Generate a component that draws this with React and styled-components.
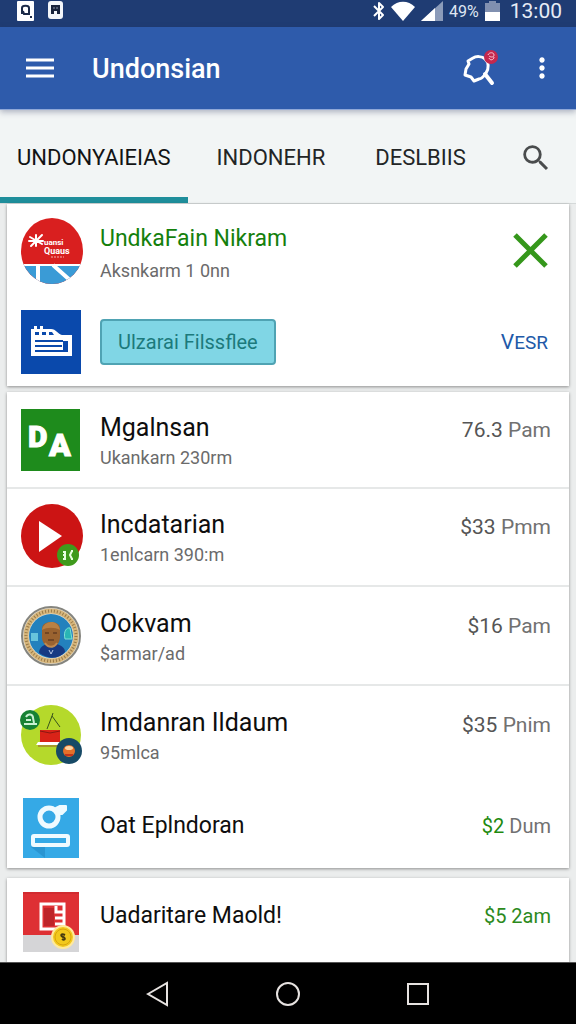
import React, { useState } from "react";
import styled, { createGlobalStyle, css } from "styled-components";
import { MdMoreVert, MdSearch } from "react-icons/md";

const GlobalStyle = createGlobalStyle`
  * {
    box-sizing: border-box;
  }

  body {
    margin: 0;
    background: #ebeded;
    font-family: Roboto, "Noto Sans", sans-serif;
  }

  button {
    border: none;
    padding: 0;
    background: none;
    color: inherit;
    font: inherit;
    cursor: pointer;
  }
`;

const Page = styled.div`
  display: flex;
  flex-direction: column;
  min-height: 100vh;
`;

const StatusBar = styled.div`
  display: flex;
  align-items: flex-start;
  justify-content: space-between;
  height: 27px;
  padding: 0 14px 0 17px;
  background: #1f3c73;
  color: #fff;
`;

const StatusGroup = styled.div`
  display: flex;
  align-items: center;
  gap: ${(props) => props.gap}px;
  height: 22px;
`;

const Battery = styled.span`
  font-size: 16px;
  color: #dfe6f2;
`;

const Clock = styled.span`
  margin-left: 4px;
  font-size: 21px;
  line-height: 22px;
  color: #e6ecf6;
`;

const AppBar = styled.header`
  position: relative;
  display: flex;
  align-items: center;
  height: 83px;
  padding: 0 18px 0 22px;
  background: #2e5bab;
  border-bottom: 1px solid #8fa8d8;
  box-shadow: 0 2px 6px rgba(40, 50, 90, 0.35);
  color: #fff;
`;

const AppTitle = styled.h1`
  flex: 1;
  margin: 0 0 0 34px;
  padding-top: 2px;
  font-size: 27px;
  font-weight: 500;
  line-height: 36px;
`;

const IconButton = styled.button`
  display: flex;
  align-items: center;
  justify-content: center;
  width: ${(props) => props.size}px;
  height: ${(props) => props.size}px;
`;

const AppActions = styled.div`
  display: flex;
  align-items: center;
  gap: 28px;
`;

const Tabs = styled.nav`
  display: flex;
  align-items: stretch;
  height: 94px;
  background: #f2f5f5;
  border-bottom: 1px solid #d5d9d9;
`;

const Tab = styled.button`
  && {
    padding: 8px ${(props) => props.pad}px 0;
    border-bottom: 6px solid transparent;
    font-size: 22px;
    color: #232526;
  }

  ${(props) =>
    props.active &&
    css`
      && {
        color: #111314;
        border-bottom: 6px solid #1f8e9b;
      }
    `}
`;

const TabSearch = styled.div`
  display: flex;
  flex: 1;
  align-items: center;
  justify-content: flex-end;
  padding: 2px 22px 0 0;
  color: #4a4c4d;
`;

const Content = styled.main`
  display: flex;
  flex: 1;
  flex-direction: column;
  padding: 0 7px;
`;

const Card = styled.section`
  margin-bottom: ${(props) => props.gap || 0}px;
  background: #fff;
  box-shadow: 0 1px 3px rgba(0, 0, 0, 0.4);

  ${(props) =>
    props.grow &&
    css`
      flex: 1;
    `}
`;

const Row = styled.div`
  display: flex;
  align-items: center;
  gap: 17px;
  min-height: ${(props) => props.height}px;
  padding: 0 18px 0 14px;

  ${(props) =>
    props.divider &&
    css`
      border-bottom: 2px solid #e6e8e8;
    `}
`;

const TopRow = styled(Row)`
  align-items: flex-start;
  padding-top: 10px;
`;

const Logo = styled.svg`
  flex: none;
  width: 62px;
  height: 68px;
  overflow: visible;
`;

const RowText = styled.div`
  flex: 1;
`;

const Name = styled.div`
  padding-top: ${(props) => (props.single ? 0 : 4)}px;
  font-size: ${(props) => (props.single || props.green ? 23 : 25)}px;
  line-height: ${(props) => (props.green ? 36 : 32)}px;
  color: ${(props) => (props.green ? "#14800c" : "#0e0e0e")};
`;

const Detail = styled.div`
  font-size: 18px;
  line-height: 28px;
  color: #6b6b6b;
`;

const Price = styled.div`
  padding-bottom: ${(props) => (props.raised ? 20 : 0)}px;
  font-size: ${(props) => (props.raised ? 21 : 20)}px;
  line-height: 28px;
  color: ${(props) => (props.green ? "#2c8a1c" : "#717171")};
`;

const Amount = styled.span`
  color: ${(props) => (props.green ? "#1f8a10" : "#555")};
`;

const LastLine = styled.div`
  display: flex;
  flex: 1;
  align-items: center;
  height: 56px;
`;

const Chip = styled.button`
  && {
    height: 46px;
    padding: 0 16px;
    border: 2px solid #4fa3b3;
    border-radius: 4px;
    background: #80d6e5;
    color: #1c7a7c;
    font-size: 20px;
  }
`;

const TextButton = styled.button`
  && {
    padding-right: 3px;
    font-size: 19px;
    color: #2159a8;
  }

  &::first-letter {
    font-size: 21px;
  }
`;

const NavBar = styled.nav`
  display: flex;
  align-items: center;
  justify-content: center;
  gap: 90px;
  height: 62px;
  border-top: 1px solid #555;
  background: #000;
`;

const TravelLogo = () => (
  <Logo viewBox="0 0 62 68">
    <defs>
      <clipPath id="travel">
        <ellipse cx="31" cy="34" rx="31" ry="33" />
      </clipPath>
    </defs>
    <g clipPath="url(#travel)">
      <rect width="62" height="68" fill="#d91f1f" />
      <rect y="47" width="62" height="21" fill="#3a9bd6" />
      <path d="M17 47v21M32 48l19 17" stroke="#fff" strokeWidth="4" fill="none" />
      <path d="M0 48h62" stroke="#fff" strokeWidth="2" />
    </g>
    <path
      d="M15 18v11M9 20l12 7M21 18L10 29M8 24h14"
      stroke="#fff"
      strokeWidth="2"
      strokeLinecap="round"
    />
    <text x="23" y="28" fontSize="8" fontWeight="700" fill="#fff">
      uansi
    </text>
    <text x="23" y="37" fontSize="9" fontWeight="700" fill="#fff">
      Quaus
    </text>
    <path d="M30 40h13" stroke="#f5b0b0" strokeWidth="1" strokeDasharray="2 1" />
  </Logo>
);

const TicketLogo = () => (
  <Logo viewBox="0 0 62 68">
    <rect y="2" width="60" height="64" fill="#0a49ac" />
    <path
      d="M10 48V21h3v-3h3v3h3v-3h3v3h8c5 0 7 5 11 6h10v21z"
      fill="#fff"
    />
    <path d="M14 24h4v3h-4zM21 24h4v3h-4zM28 24h3l2 3h-5zM42 33h5v11h-5z" fill="#0a49ac" />
    <path d="M14 33h28M14 38h27M14 43h28" stroke="#0a49ac" strokeWidth="2" />
  </Logo>
);

const DaLogo = () => (
  <Logo viewBox="0 0 62 68">
    <rect y="3" width="59" height="62" fill="#1e8b1c" />
    <text x="7" y="41" fontSize="30" fontWeight="900" fill="#fff" stroke="#fff">
      D
    </text>
    <text x="28" y="50" fontSize="32" fontWeight="900" fill="#fff" stroke="#fff">
      A
    </text>
  </Logo>
);

const PlayLogo = () => (
  <Logo viewBox="0 0 62 68">
    <ellipse cx="31" cy="33" rx="31" ry="32" fill="#cc1414" />
    <path d="M18 18v31l23-16z" fill="#fff" />
    <circle cx="47" cy="52" r="11" fill="#3f9a1c" />
    <path
      d="M44 48v9M42 49h2M42 56h2M51 48l-2 4 2 4M50 48h2M50 56h2M42 52h3"
      stroke="#e8ffe0"
      strokeWidth="2"
      fill="none"
    />
  </Logo>
);

const SealLogo = () => (
  <Logo viewBox="0 0 62 68">
    <circle cx="30" cy="34" r="29" fill="#e8e3d8" stroke="#85857f" strokeWidth="2" />
    <circle cx="30" cy="34" r="25" fill="none" stroke="#d6b67c" strokeWidth="5" />
    <circle
      cx="30"
      cy="34"
      r="25"
      fill="none"
      stroke="#9a7a48"
      strokeWidth="3"
      strokeDasharray="1 2"
    />
    <circle cx="30" cy="34" r="22" fill="#2381bd" />
    <path d="M10 31h7v8h-7z" fill="#68c4dc" />
    <path d="M44 37c-2-8 2-12 5-11l2 11z" fill="#29b5b5" stroke="#7de0d5" />
    <path d="M18 51c0-5 4-8 8-9l5 4 5-4c5 2 8 4 8 8-6 7-16 8-26 1z" fill="#173a83" />
    <path d="M21 27c0-5 4-7 9-7s9 2 9 7v8c0 6-4 10-9 10s-9-4-9-10z" fill="#9a6330" />
    <path d="M21 28c2-10 16-11 18 0-5-3-13-3-18 0z" fill="#b98145" />
    <path d="M24 31h4M32 31h4M27 38h6" stroke="#4b2a18" strokeWidth="1" />
    <path d="M24 41c3 5 9 5 12 0" stroke="#c08a50" strokeWidth="2" fill="none" />
    <path d="M28 48l2 4 2-4" stroke="#b5c6e8" fill="none" />
  </Logo>
);

const CakeLogo = () => (
  <Logo viewBox="0 0 62 68">
    <circle cx="30" cy="34" r="30" fill="#b5d92b" />
    <path d="M26 28l5-13 8 11M31 15l1-3" stroke="#39541c" strokeWidth="1" fill="none" />
    <rect x="19" y="29" width="20" height="12" fill="#d92318" />
    <path d="M19 30l10 2 10-2" stroke="#8c1712" fill="none" />
    <path d="M17 41h22v3H15z" fill="#fff" />
    <path d="M17 45h20" stroke="#9a5a2c" strokeWidth="1" />
    <circle cx="9" cy="19" r="10" fill="#178234" />
    <path d="M3 23h13M5 16c2-4 7-3 7 1l1 5M5 19h5" stroke="#c9f0d2" strokeWidth="2" fill="none" />
    <circle cx="48" cy="50" r="13" fill="#174a66" />
    <circle cx="48" cy="50" r="6" fill="#e5702a" />
    <ellipse cx="48" cy="47" rx="4" ry="2" fill="#ffd6a3" />
    <path d="M44 54h8" stroke="#c3351a" strokeWidth="2" />
  </Logo>
);

const DishLogo = () => (
  <Logo viewBox="0 0 62 68">
    <rect x="2" y="6" width="56" height="60" fill="#35a9e6" />
    <path d="M10 55h14v11z" fill="#2288c4" opacity="0.6" />
    <circle cx="28" cy="25" r="9" fill="none" stroke="#effaff" strokeWidth="5" />
    <path
      d="M35 20v-4l4-2h6v4l-4 4h-5z"
      fill="#effaff"
      stroke="#effaff"
      strokeWidth="2"
      strokeLinejoin="round"
    />
    <rect x="12" y="44" width="35" height="9" rx="1" fill="#35a9e6" stroke="#effaff" strokeWidth="4" />
  </Logo>
);

const CoinLogo = () => (
  <Logo viewBox="0 0 62 68">
    <rect x="2" y="4" width="56" height="60" fill="#d5d5d7" />
    <rect x="2" y="4" width="56" height="43" fill="#de3034" />
    <path d="M2 5h56" stroke="#c4272c" strokeWidth="1" />
    <rect x="20" y="16" width="23" height="25" fill="#de3034" stroke="#fff" strokeWidth="3" />
    <rect x="23" y="20" width="10" height="18" fill="#be2429" />
    <path d="M35 18v6h7M34 30h9M34 36h9" stroke="#fff" strokeWidth="3" fill="none" />
    <circle cx="42" cy="49" r="11" fill="#f2c91c" stroke="#ffe99c" strokeWidth="2" />
    <circle cx="42" cy="49" r="8" fill="none" stroke="#d9a40f" />
    <path d="M44 47c-4-2-5 1-2 2s2 4-1 2" stroke="#473b10" strokeWidth="2" fill="none" />
  </Logo>
);

const CallIcon = () => (
  <svg width="36" height="38" viewBox="0 0 36 38">
    <path
      d="M24 24c3-4 3-11-1-14-3-3-9-3-12-1l-5 3 1 3-3 5-1 6 6 2 3 4 5-2c3 0 5-3 7-6z"
      fill="none"
      stroke="#fff"
      strokeWidth="3"
      strokeLinejoin="round"
    />
    <path d="M23 25l7 9" stroke="#fff" strokeWidth="4" strokeLinecap="round" />
    <circle cx="29" cy="8" r="7" fill="#c5284e" />
    <path
      d="M26 6c1-3 6-3 6 0s-4 2-5 1m0 2c1 3 5 2 5-1"
      fill="none"
      stroke="#ffc9d6"
      strokeWidth="1"
    />
  </svg>
);

const groceries = [
  { name: "Mgalnsan", detail: "Ukankarn 230rm", amount: "76.3", unit: "Pam", logo: DaLogo, height: 97 },
  { name: "Incdatarian", detail: "1enlcarn 390:m", amount: "$33", unit: "Pmm", logo: PlayLogo, height: 98 },
  { name: "Ookvam", detail: "$armar/ad", amount: "$16", unit: "Pam", logo: SealLogo, height: 99 },
  { name: "Imdanran Ildaum", detail: "95mlca", amount: "$35", unit: "Pnim", logo: CakeLogo, height: 98 },
];

const tabs = [
  { label: "UNDONYAIEIAS", pad: 17 },
  { label: "INDONEHR", pad: 29 },
  { label: "DESLBIIS", pad: 21 },
];

const App = () => {
  const [active, setActive] = useState(0);

  return (
    <>
      <GlobalStyle />
      <Page>
        <StatusBar>
          <StatusGroup gap={14}>
            <svg width="17" height="20" viewBox="0 0 17 20">
              <rect width="17" height="20" rx="1" fill="#fff" />
              <path d="M5 13V7c0-3 7-3 7 0v6H7l-1-3M13 16h2" stroke="#1c2a48" strokeWidth="2" fill="none" />
            </svg>
            <svg width="15" height="20" viewBox="0 0 15 20">
              <rect width="15" height="18" rx="3" fill="#f3f6fa" />
              <path d="M3 4h9v9H9v-3H6v3H3z" fill="#18233b" />
              <path d="M5 7h2M8 7h2" stroke="#8a95aa" />
            </svg>
          </StatusGroup>
          <StatusGroup gap={6}>
            <svg width="12" height="20" viewBox="0 0 12 20">
              <path
                d="M1 5l9 9-4 4V2l4 4-9 9"
                fill="none"
                stroke="#fff"
                strokeWidth="2"
                strokeLinejoin="round"
              />
            </svg>
            <svg width="24" height="20" viewBox="0 0 24 20">
              <path d="M12 20L0 6C7-1 17-1 24 6z" fill="#fff" />
            </svg>
            <svg width="22" height="20" viewBox="0 0 22 20">
              <path d="M0 20L22 0v20z" fill="#8b9bb9" />
              <path d="M0 20L14 7v13z" fill="#fff" />
            </svg>
            <Battery>49%</Battery>
            <svg width="15" height="20" viewBox="0 0 15 20">
              <path d="M0 2h4V0h7v2h4v18H0z" fill="#8190b0" />
              <path d="M0 11h15v9H0z" fill="#fff" />
            </svg>
            <Clock>13:00</Clock>
          </StatusGroup>
        </StatusBar>

        <AppBar>
          <IconButton size={36} aria-label="Menu">
            <svg width="36" height="36" viewBox="0 0 36 36">
              <path d="M4 10h28M4 18h28M4 26h28" stroke="#fff" strokeWidth="3" />
            </svg>
          </IconButton>
          <AppTitle>Undonsian</AppTitle>
          <AppActions>
            <IconButton size={36} aria-label="Search messages">
              <CallIcon />
            </IconButton>
            <IconButton size={32} aria-label="More">
              <MdMoreVert size={36} />
            </IconButton>
          </AppActions>
        </AppBar>

        <Tabs>
          {tabs.map((tab, i) => (
            <Tab
              key={tab.label}
              pad={tab.pad}
              active={active === i}
              onClick={() => setActive(i)}
            >
              {tab.label}
            </Tab>
          ))}
          <TabSearch>
            <IconButton size={36} aria-label="Search">
              <MdSearch size={34} />
            </IconButton>
          </TabSearch>
        </Tabs>

        <Content>
          <Card gap={6}>
            <Row height={94}>
              <TravelLogo />
              <RowText>
                <Name green>UndkaFain Nikram</Name>
                <Detail>Aksnkarm 1 0nn</Detail>
              </RowText>
              <IconButton size={40} aria-label="Close">
                <svg width="40" height="40" viewBox="0 0 40 40">
                  <path d="M4 4l31 31M35 4L4 35" stroke="#35971b" strokeWidth="5" />
                </svg>
              </IconButton>
            </Row>
            <Row height={88}>
              <TicketLogo />
              <RowText>
                <Chip>Ulzarai Filssflee</Chip>
              </RowText>
              <TextButton>VESR</TextButton>
            </Row>
          </Card>

          <Card gap={10}>
            {groceries.map((item, i) => (
              <Row key={item.name} height={item.height} divider={i < 3}>
                <item.logo />
                <RowText>
                  <Name>{item.name}</Name>
                  <Detail>{item.detail}</Detail>
                </RowText>
                <Price raised>
                  <Amount>{item.amount}</Amount> {item.unit}
                </Price>
              </Row>
            ))}
            <Row height={84}>
              <DishLogo />
              <RowText>
                <Name single>Oat Eplndoran</Name>
              </RowText>
              <Price>
                <Amount green>$2</Amount> Dum
              </Price>
            </Row>
          </Card>

          <Card grow>
            <TopRow height={80}>
              <CoinLogo />
              <LastLine>
                <RowText>
                  <Name single>Uadaritare Maold!</Name>
                </RowText>
                <Price green>$5 2am</Price>
              </LastLine>
            </TopRow>
          </Card>
        </Content>

        <NavBar>
          <IconButton size={40} aria-label="Back">
            <svg width="24" height="28" viewBox="0 0 24 28">
              <path d="M2 14L21 3v22z" fill="none" stroke="#e6e2e0" strokeWidth="2" />
            </svg>
          </IconButton>
          <IconButton size={40} aria-label="Home">
            <svg width="26" height="26" viewBox="0 0 26 26">
              <circle cx="13" cy="13" r="11" fill="none" stroke="#e6e2e0" strokeWidth="2" />
            </svg>
          </IconButton>
          <IconButton size={40} aria-label="Recent apps">
            <svg width="24" height="24" viewBox="0 0 24 24">
              <rect x="2" y="2" width="20" height="20" fill="none" stroke="#e6e2e0" strokeWidth="2" />
            </svg>
          </IconButton>
        </NavBar>
      </Page>
    </>
  );
};

export default App;
